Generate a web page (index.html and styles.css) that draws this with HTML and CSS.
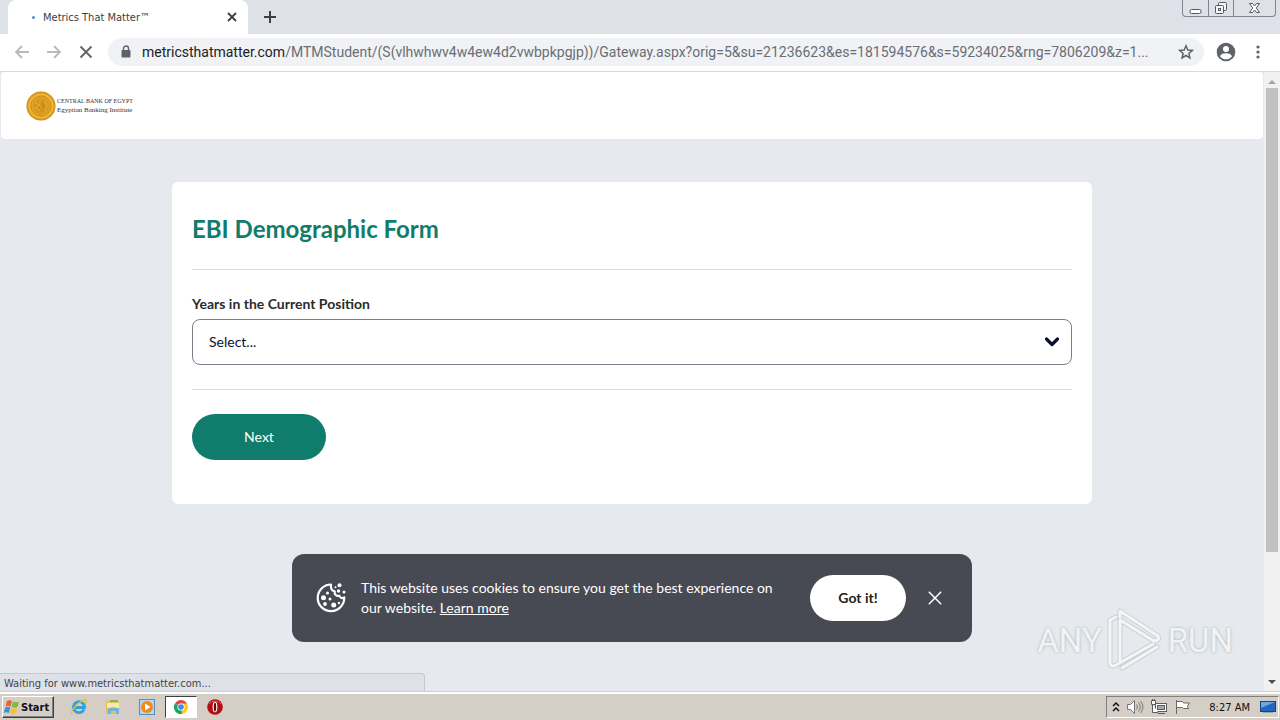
FILE: index.html
```html
<!DOCTYPE html>
<html lang="en">
<head>
<meta charset="utf-8">
<meta name="viewport" content="width=device-width, initial-scale=1">
<title>Metrics That Matter™</title>
<link rel="stylesheet" href="styles.css">
</head>
<body>
<div class="desktop">
  <header class="browser">
    <div class="tab-strip">
      <div class="tab">
        <span class="spinner"></span>
        <span class="tab-title">Metrics That Matter™</span>
        <button class="icon-btn" aria-label="Close tab"><svg width="10" height="10" viewBox="0 0 10 10"><path d="M1 1l8 8M9 1l-8 8" stroke="#3c4043" stroke-width="1.8"/></svg></button>
      </div>
      <button class="icon-btn new-tab" aria-label="New tab"><svg width="12" height="12" viewBox="0 0 12 12"><path d="M6 0v12M0 6h12" stroke="#3c4043" stroke-width="2"/></svg></button>
      <div class="window-controls">
        <button class="win-btn" aria-label="Minimize"><svg width="13" height="14" viewBox="0 0 13 14"><rect x="1" y="8.500" width="11" height="4" rx="1.500" fill="#fff" stroke="#555b66"/></svg></button>
        <button class="win-btn" aria-label="Restore"><svg width="14" height="14" viewBox="0 0 14 14" fill="#f4f6f8" stroke="#555b66"><rect x="4.500" y="1.500" width="8" height="8" rx="1"/><rect x="1.500" y="4.500" width="8" height="8" rx="1"/><rect x="4.500" y="7.500" width="2" height="2"/></svg></button>
        <button class="win-btn win-close" aria-label="Close"><svg width="13" height="14" viewBox="0 0 13 14"><path d="M1.500 2.500h3l2 2.500 2-2.500h3L8.300 7l3.200 4.500h-3L6.500 9l-2 2.500h-3L4.700 7z" fill="#fff" stroke="#555b66"/></svg></button>
      </div>
    </div>
    <div class="toolbar">
      <button class="icon-btn nav-btn" aria-label="Back"><svg width="16" height="14" viewBox="0 0 16 14" fill="none" stroke="#b8babd" stroke-width="1.800"><path d="M15 7H2M8 1L2 7l6 6"/></svg></button>
      <button class="icon-btn nav-btn" aria-label="Forward"><svg width="16" height="14" viewBox="0 0 16 14" fill="none" stroke="#b8babd" stroke-width="1.800"><path d="M1 7h13M8 1l6 6-6 6"/></svg></button>
      <button class="icon-btn nav-btn" aria-label="Stop loading"><svg width="14" height="14" viewBox="0 0 14 14"><path d="M1.500 1.500l11 11M12.500 1.500l-11 11" stroke="#5f6368" stroke-width="1.800"/></svg></button>
      <div class="omnibox">
        <svg class="lock" width="10" height="14" viewBox="0 0 10 14"><path d="M2.500 6V3.500a2.500 2.500 0 0 1 5 0V6" fill="none" stroke="#5f6368" stroke-width="1.400"/><rect x="0.500" y="5" width="9" height="7.500" rx="1" fill="#5f6368"/></svg>
        <label class="url-host" for="url">metricsthatmatter.com</label><input class="url-path" id="url" type="text" value="/MTMStudent/(S(vlhwhwv4w4ew4d2vwbpkpgjp))/Gateway.aspx?orig=5&amp;su=21236623&amp;es=181594576&amp;s=59234025&amp;rng=7806209&amp;z=1...">
        <button class="icon-btn" aria-label="Bookmark this page"><svg width="16" height="16" viewBox="0 0 16 16"><path d="M8 1.800l1.800 4.200 4.500.4-3.400 3 1 4.500L8 11.500l-3.900 2.400 1-4.500-3.400-3 4.500-.4z" fill="none" stroke="#5f6368" stroke-width="1.500"/></svg></button>
      </div>
      <button class="icon-btn profile" aria-label="Profile"><svg width="20" height="20" viewBox="0 0 20 20"><circle cx="10" cy="10" r="9.300" fill="#5f6368"/><circle cx="10" cy="7" r="3" fill="#fff"/><path d="M4 14.200c1.200-2.400 3.500-3 6-3s4.800.6 6 3A7.200 7.200 0 0 1 10 17.300a7.200 7.200 0 0 1-6-3.100z" fill="#fff"/></svg></button>
      <button class="icon-btn menu" aria-label="Menu"><svg width="4" height="14" viewBox="0 0 4 14" fill="#5f6368"><circle cx="2" cy="2" r="1.600"/><circle cx="2" cy="7" r="1.600"/><circle cx="2" cy="12" r="1.600"/></svg></button>
    </div>
  </header>

  <div class="viewport">
    <div class="page">
      <div class="site-header">
        <svg class="coin" width="30" height="30" viewBox="0 0 30 30"><defs><radialGradient id="gold"><stop offset="0" stop-color="#c48210"/><stop offset=".55" stop-color="#dd9d1c"/><stop offset=".8" stop-color="#efb83a"/><stop offset="1" stop-color="#c98512"/></radialGradient></defs><circle cx="15" cy="15" r="14.500" fill="url(#gold)"/><circle cx="15" cy="15" r="10" fill="none" stroke="#d08d15"/><path d="M9 11l4 3-3 3 4 3M14 9v5l2 4M18 10l3 4-2 4 1 3" fill="none" stroke="#e0aa3a" stroke-width="1.300"/></svg>
        <div class="brand"><span>CENTRAL BANK OF EGYPT</span><span class="brand-sub">Egyptian Banking Institute</span></div>
      </div>
      <main class="card">
        <form class="form">
          <h1 class="form-title">EBI Demographic Form</h1>
          <div class="field">
            <label class="field-label" for="years">Years in the Current Position</label>
            <div class="select-wrap">
              <select class="select" id="years"><option>Select...</option></select>
              <svg class="chevron" width="16" height="12" viewBox="0 0 16 12"><path d="M2.500 3L8 8.500 13.500 3" fill="none" stroke="#0a0f2c" stroke-width="3.200" stroke-linecap="round" stroke-linejoin="round"/></svg>
            </div>
          </div>
          <button class="next" type="button">Next</button>
        </form>
      </main>
      <section class="cookie" aria-label="Cookie notice">
        <svg class="cookie-icon" width="30" height="30" viewBox="0 0 30 30"><path d="M15 1.500a13.300 13.300 0 1 0 13.300 12.900c-1.600 1.300-4.300.7-4.900-1.600-2.900.7-5.400-1.500-4.700-4.500C15.800 7.800 14.500 5 15 1.500z" fill="none" stroke="#fff" stroke-width="2.200" stroke-linejoin="round"/><g fill="#fff"><circle cx="11.500" cy="10" r="1.500"/><circle cx="7.500" cy="14.800" r="2.500"/><circle cx="14" cy="16" r="1.500"/><circle cx="9" cy="21" r="1.900"/><circle cx="17.700" cy="22" r="2.500"/><circle cx="23" cy="20" r="1.200"/><circle cx="23.500" cy="2.300" r="2"/><circle cx="19.500" cy="4.300" r="1"/><circle cx="22.500" cy="8" r="1.700"/><circle cx="28" cy="9" r="1.500"/></g></svg>
        <p class="cookie-text">This website uses cookies to ensure you get the best experience on our website. <a class="learn" href="#">Learn more</a></p>
        <button class="got-it">Got it!</button>
        <button class="icon-btn cookie-close" aria-label="Dismiss"><svg width="14" height="14" viewBox="0 0 14 14"><path d="M.8.800l12.400 12.400M13.200.800L.8 13.200" stroke="#fff" stroke-width="1.500"/></svg></button>
      </section>
      <div class="watermark"><span>ANY</span><svg width="56" height="64" viewBox="0 0 56 64" fill="none" stroke-linejoin="round" stroke-linecap="round"><g stroke="#cdd0d4" stroke-width="5"><path d="M9 9L3 12v43c0 3 3 4 6 2l37-21M13 54V12l34 21c4 0 6-3 4-5L13 3v6M15 60l35-21"/></g><g stroke="#f3f5f6" stroke-width="3"><path d="M9 9L3 12v43c0 3 3 4 6 2l37-21M13 54V12l34 21c4 0 6-3 4-5L13 3v6M15 60l35-21"/></g></svg><span>RUN</span></div>
      <div class="status">Waiting for www.metricsthatmatter.com...</div>
    </div>
    <div class="scrollbar">
      <svg class="arrow" width="8" height="5" viewBox="0 0 8 5"><path d="M0 5l4-4 4 4z" fill="#a3a3a3"/></svg>
      <div class="track"><div class="thumb"></div></div>
      <svg class="arrow" width="8" height="5" viewBox="0 0 8 5"><path d="M0 0l4 4 4-4z" fill="#505050"/></svg>
    </div>
  </div>

  <footer class="taskbar">
    <button class="start"><svg width="18" height="16" viewBox="0 0 18 16"><path d="M4 2c2-1 3-1 5 0L7.500 7.500c-2-1-3-1-5 0z" fill="#e8622a"/><path d="M10 2.500c2 1 4 1 6 0L14.500 8c-2 1-4 1-6 0z" fill="#7fba42"/><path d="M2.300 8.500c2-1 3-1 5 0L5.800 14c-2-1-3-1-5 0z" fill="#3f8fd8"/><path d="M8.200 9c2 1 4 1 6 0l-1.500 5.500c-2 1-4 1-6 0z" fill="#f6c12c"/></svg>Start</button>
    <button class="task" aria-label="Internet Explorer"><svg width="18" height="18" viewBox="0 0 18 18" fill="none"><path d="M14 11.500a5.500 5.500 0 1 1 .5-2H5" stroke="#2e9fe0" stroke-width="2.800"/><path d="M2 16C0 13 9 3 15 2c3 0 1 3 0 4" stroke="#e7bd3d" stroke-width="1.300"/></svg></button>
    <button class="task" aria-label="Explorer"><svg width="18" height="18" viewBox="0 0 18 18"><path d="M2 3h5l1 1h7v12H2z" fill="#e6bf58"/><path d="M3 5h12v5H3z" fill="#fbe9a3"/><path d="M6 2h8v2H6z" fill="#72b865"/><path d="M4 16v-5c0-2 11-2 11 0v5h-3v-3H7v3z" fill="#6bb6dc"/></svg></button>
    <button class="task" aria-label="Media Player"><svg width="18" height="18" viewBox="0 0 18 18"><rect x="1.500" y="1.500" width="15" height="15" fill="#b7d6ed" stroke="#5790bd"/><circle cx="9" cy="9" r="6" fill="#f18a1c"/><path d="M7 5.500v7L12.500 9z" fill="#fff"/></svg></button>
    <button class="task task-active" aria-label="Chrome"><svg width="16" height="16" viewBox="0 0 16 16"><path d="M8 8L2 4.500A7 7 0 0 1 14 4.500z" fill="#dd4b3e"/><path d="M8 8V4.500h6.100A7 7 0 0 1 8 15z" fill="#f7c92f"/><path d="M8 8l1 7A7 7 0 0 1 2 4.400z" fill="#1ea362"/><circle cx="8" cy="8" r="3.600" fill="#fff"/><circle cx="8" cy="8" r="2.800" fill="#4587f0"/></svg></button>
    <button class="task" aria-label="Opera"><svg width="18" height="18" viewBox="0 0 18 18"><circle cx="9" cy="9" r="7.800" fill="#b30f14"/><path d="M3 6a7 6 0 0 1 12 0" stroke="#de5a58" fill="none"/><ellipse cx="9" cy="9" rx="2.400" ry="5.300" fill="#fff"/><ellipse cx="9" cy="9" rx="1.200" ry="4.600" fill="#74080b"/></svg></button>
    <div class="tray">
      <svg width="8" height="12" viewBox="0 0 8 12"><path d="M1 5l3-3 3 3M1 10l3-3 3 3" fill="none" stroke="#111" stroke-width="1.500"/></svg>
      <svg width="18" height="16" viewBox="0 0 18 16" fill="none" stroke="#777"><path d="M1.500 5.500h3l4-4v13l-4-4h-3z" fill="#fff"/><path d="M10.500 5.500q2 2.500 0 5M12.500 3.500q3.500 4.500 0 9M14.500 2q5 6 0 12"/></svg>
      <svg width="18" height="16" viewBox="0 0 18 16" fill="#fff" stroke="#5c5c5c"><rect x="5.500" y="4.500" width="11" height="8"/><rect x="7.500" y="6.500" width="7" height="4" fill="#aaa"/><path d="M8 14.500h7M2.500 5v8.500H8"/><path d="M1.500 1.500h4v4h-4zM2.500 0v2M4.500 0v2"/></svg>
      <svg width="18" height="16" viewBox="0 0 18 16" fill="#fff" stroke="#6a6a6a"><path d="M2.500 1v14M2.500 2.500h6l1 1.500h6l-2 3 1 2.500h-5l-1-1h-6z"/></svg>
      <span class="clock">8:27 AM</span>
      <svg width="16" height="14" viewBox="0 0 16 14"><rect x=".5" y="1.500" width="15" height="10" fill="#2465bd" stroke="#18437c"/><path d="M1 2h14L1 8z" fill="#6ea5e3"/><path d="M3 12h10v1H3z" fill="#8aa"/></svg>
    </div>
  </footer>
</div>
</body>
</html>
```
FILE: styles.css
```css
* { box-sizing: border-box; }
body { margin: 0; font-family: "Lato", sans-serif; font-size: 14px; color: #222; }
button, input, select { font: inherit; color: inherit; }
button { padding: 0; border: 0; background: none; }
svg { display: block; flex: none; }
.desktop { display: flex; flex-direction: column; height: 100vh; overflow: hidden; }
.icon-btn { display: grid; place-items: center; width: 16px; height: 16px; flex: none; }

.tab-strip { display: flex; height: 34px; padding-left: 8px; background: #dee1e8; }
.tab { display: flex; align-items: center; width: 240px; padding: 0 8px 0 24px; background: #fff; border-radius: 8px 8px 0 0; font: 11px "DejaVu Sans Condensed", "DejaVu Sans", sans-serif; color: #3c4043; }
.spinner { width: 3px; height: 3px; margin-right: 8px; border-radius: 50%; background: #4a8ddc; }
.tab-title { flex: 1; white-space: nowrap; }
.new-tab { margin: 9px 0 0 14px; }
.window-controls { display: flex; height: 17px; margin: 0 4px 0 auto; border: 1px solid #80858f; border-top: 0; border-radius: 0 0 4px 4px; }
.win-btn { display: grid; place-items: center; width: 25px; }
.win-btn + .win-btn { border-left: 1px solid #80858f; }
.win-close { width: 42px; }

.toolbar { display: flex; align-items: center; height: 38px; padding: 0 8px 2px 14px; background: #fff; border-bottom: 1px solid #d8dadc; }
.nav-btn { margin-right: 16px; }
.omnibox { display: flex; align-items: center; flex: 1; height: 28px; margin-left: -2px; padding: 0 10px 0 13px; border-radius: 14px; background: #f0f2f5; font: 14px "Roboto", sans-serif; }
.lock { margin-right: 11px; }
.url-host { color: #202124; }
.url-path { flex: 1; min-width: 0; height: 24px; padding: 0; border: 0; outline: 0; background: none; color: #6a6e73; text-overflow: ellipsis; }
.profile { width: 20px; height: 20px; margin: 0 14px 0 12px; }
.menu { margin-right: 6px; }

.viewport { display: flex; flex: 1; min-height: 0; }
.page { position: relative; flex: 1; min-width: 0; background: #e6e9ed; }
.site-header { display: flex; align-items: center; gap: 1px; height: 67px; margin: 0 1px; padding-left: 25px; border-radius: 4px; background: #fff; }
.brand { display: flex; flex-direction: column; font: 6px/9px "Liberation Serif", serif; color: #333; white-space: nowrap; }
.brand-sub { font-size: 7px; }
.card { width: calc(100% - 40px); max-width: 920px; margin: 43px auto 0; padding: 31px 20px 44px; border-radius: 6px; background: #fff; }
.form-title { margin: 0; padding-bottom: 24px; border-bottom: 1px solid #dcdcde; font-size: 24px; line-height: 32px; font-weight: 700; color: #107c6c; }
.field { padding: 24px 0; border-bottom: 1px solid #dcdcde; }
.field-label { display: block; margin-bottom: 5px; font-size: 14px; line-height: 20px; font-weight: 700; color: #2b2b2b; }
.select-wrap { position: relative; }
.select { display: block; width: 100%; height: 46px; padding: 0 16px 2px; border: 1px solid #7b7c87; border-radius: 8px; background: #fff; color: #0a0f2c; appearance: none; }
.chevron { position: absolute; right: 12px; top: 17px; pointer-events: none; }
.next { display: block; width: 134px; height: 46px; margin-top: 24px; padding-bottom: 2px; border-radius: 23px; background: #107c6c; color: #fff; }

.cookie { position: absolute; left: 0; right: 0; bottom: 50px; display: flex; align-items: center; width: 680px; max-width: 100%; height: 88px; margin: 0 auto; padding: 0 29px 0 24px; border-radius: 12px; background: #474953; color: #fff; }
.cookie-text { flex: 1; margin: 0 32px 0 15px; line-height: 20px; }
.learn { color: inherit; }
.got-it { width: 96px; height: 46px; padding-bottom: 2px; border-radius: 23px; background: #fff; color: #222; font-weight: 700; }
.cookie-close { margin-left: 21px; }
.watermark { position: absolute; right: 31px; bottom: 20px; display: flex; align-items: center; gap: 5px; font: 33px "Roboto", sans-serif; color: #f1f3f5; text-shadow: 0 0 3px #a9adb2; }
.status { position: absolute; left: 0; bottom: 0; width: 425px; height: 19px; padding-left: 4px; border: 1px solid #c5c8cf; border-left: 0; border-bottom: 0; border-radius: 0 4px 0 0; background: #dee1e8; font: 11px/20px "DejaVu Sans Condensed", "DejaVu Sans", sans-serif; color: #444; }

.scrollbar { display: flex; flex-direction: column; align-items: center; width: 16px; padding: 7px 0; background: #f1f1f1; }
.track { flex: 1; width: 12px; margin: 4px 0 5px; }
.thumb { height: 79%; background: #c1c1c1; }

.taskbar { display: flex; align-items: center; height: 28px; padding: 0 1px 0 2px; border-top: 2px solid #fff; background: #d5cec6; box-shadow: 0 -1px #d5cec6; font: 11px "DejaVu Sans Condensed", "DejaVu Sans", sans-serif; color: #111; z-index: 1; }
.start { display: flex; align-items: center; width: 52px; height: 22px; margin-right: 9px; border: 1px solid; border-color: #fff #404040 #404040 #fff; box-shadow: inset -1px -1px #808080; font-weight: 700; }
.task { display: grid; place-items: center; width: 32px; height: 22px; margin-right: 2px; }
.task-active { border: 1px solid; border-color: #404040 #fff #fff #404040; background: #fff; }
.tray { display: flex; align-items: center; gap: 6px; height: 22px; margin-left: auto; padding: 0 2px 0 5px; border: 1px solid; border-color: #808080 #fff #fff #808080; }
.clock { margin: 0 4px 0 11px; }
```
